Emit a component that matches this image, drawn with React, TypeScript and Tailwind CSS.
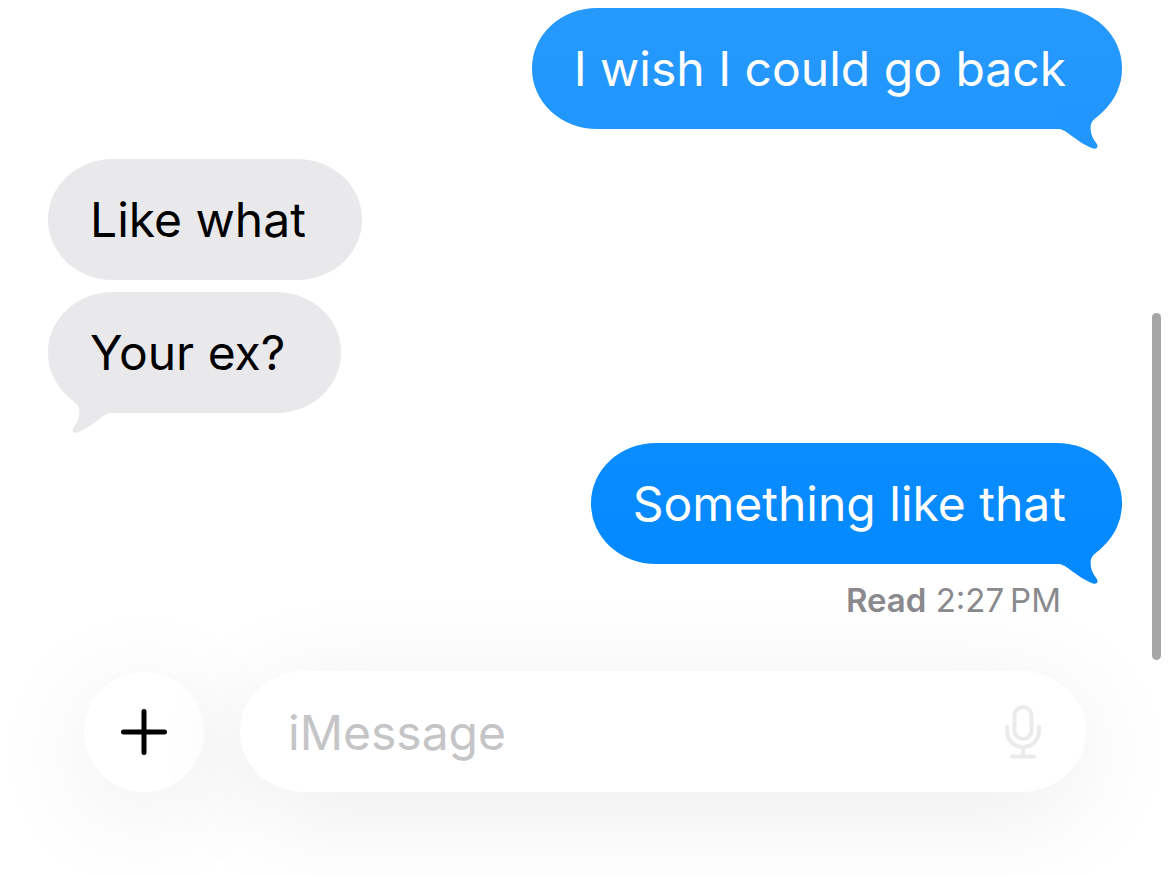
import { useState } from "react";

type Message = {
  id: number;
  text: string;
  from: "me" | "them";
  // last bubble of a group carries the tail
  tail: boolean;
  tone: string;
  tailFill: string;
};

const messages: Message[] = [
  { id: 1, text: "I wish I could go back", from: "me", tail: true, tone: "from-[#2699fd] to-[#2196fd] text-white", tailFill: "fill-[#2196fd]" },
  { id: 2, text: "Like what", from: "them", tail: false, tone: "from-[#e9e9eb] to-[#e9e9eb] text-black", tailFill: "fill-[#e9e9eb]" },
  { id: 3, text: "Your ex?", from: "them", tail: true, tone: "from-[#e9e9eb] to-[#e9e9eb] text-black", tailFill: "fill-[#e9e9eb]" },
  { id: 4, text: "Something like that", from: "me", tail: true, tone: "from-[#0b8cff] to-[#0489ff] text-white", tailFill: "fill-[#0489ff]" }
];

function Tail({ className }: { className: string }) {
  return (
    <svg viewBox="0 0 80 60" className={`absolute -bottom-5 h-[60px] w-20 ${className}`} aria-hidden="true">
      <path d="M64.5 18C60.5 23.5 56 27 52.5 30C49 33 48.6 36 48.6 39C48.6 46 51.5 50 54.5 54.5C57 58.5 54.5 60.3 51 59.4C43 57 32 48.5 25 43.5C21 40.7 19 40 14 40L14 20Z" />
    </svg>
  );
}

function Bubble({ message, spacing }: { message: Message; spacing: string }) {
  const mine = message.from === "me";
  return (
    <li
      className={`relative rounded-[65px/60px] bg-linear-to-b pt-[31px] pr-14 pb-[30px] pl-[42px] text-[48px] leading-[60px] whitespace-nowrap ${spacing} ${message.tone} ${
        mine ? "self-end" : "self-start"
      }`}
    >
      {message.tail && <Tail className={`${message.tailFill} ${mine ? "right-0" : "left-0 -scale-x-100"}`} />}
      <span className="relative">{message.text}</span>
    </li>
  );
}

function MicIcon() {
  return (
    <svg viewBox="0 0 36 54" className="h-[54px] w-9" fill="none" stroke="currentColor" strokeWidth="4" strokeLinecap="round" aria-hidden="true">
      <rect x="9.5" y="2" width="17" height="32" rx="8.5" />
      <path d="M2 21.5V25.5C2 35 9 42 18 42S34 35 34 25.5V21.5" />
      <path d="M18 42V51" />
      <path d="M7 51.5H29" />
    </svg>
  );
}

function PlusIcon() {
  return (
    <svg viewBox="0 0 46 46" className="size-[46px]" stroke="currentColor" strokeWidth="5" strokeLinecap="round" aria-hidden="true">
      <path d="M23 2.5V43.5M2.5 23H43.5" />
    </svg>
  );
}

export default function App() {
  const [draft, setDraft] = useState("");

  return (
    <div className="relative flex min-h-screen flex-col overflow-hidden bg-white font-['Inter',sans-serif]">
      <main className="flex flex-1 flex-col px-12 pt-2">
        <ul className="flex flex-col">
          {messages.map((message, i) => {
            const grouped = messages[i - 1]?.from === message.from;
            const spacing = i === 0 ? "" : grouped ? "mt-3" : "mt-[30px]";
            return <Bubble key={message.id} message={message} spacing={spacing} />;
          })}
        </ul>
        <p className="mt-[15px] self-end pr-[61px] text-[33px] leading-[42px] text-[#8a8a8e]">
          <span className="font-semibold">Read</span> 2:27{"\u202f"}PM
        </p>
      </main>

      <form className="flex items-center gap-9 px-[84px] pb-[84px]" onSubmit={(e) => e.preventDefault()}>
        <button
          type="button"
          aria-label="Add attachment"
          className="flex size-[120px] shrink-0 items-center justify-center rounded-full bg-white text-black shadow-[0_20px_110px_rgba(0,0,0,0.08)]"
        >
          <PlusIcon />
        </button>
        <div className="flex min-w-0 flex-1 items-center rounded-[65px/60px] bg-white py-[29px] pr-[45px] pl-12 shadow-[0_20px_110px_rgba(0,0,0,0.08)]">
          <input
            type="text"
            aria-label="iMessage"
            placeholder="iMessage"
            value={draft}
            onChange={(e) => setDraft(e.target.value)}
            className="min-w-0 flex-1 bg-transparent pt-[3px] text-[48px] leading-[60px] text-black outline-none placeholder:text-[#c5c5c7]"
          />
          <button type="button" aria-label="Dictate" className="text-[#ebebed]">
            <MicIcon />
          </button>
        </div>
      </form>

      {/* scroll indicator */}
      <div className="absolute top-[313px] right-[9px] h-[347px] w-[9px] rounded-full bg-[#a6a6a6]" />
    </div>
  );
}
